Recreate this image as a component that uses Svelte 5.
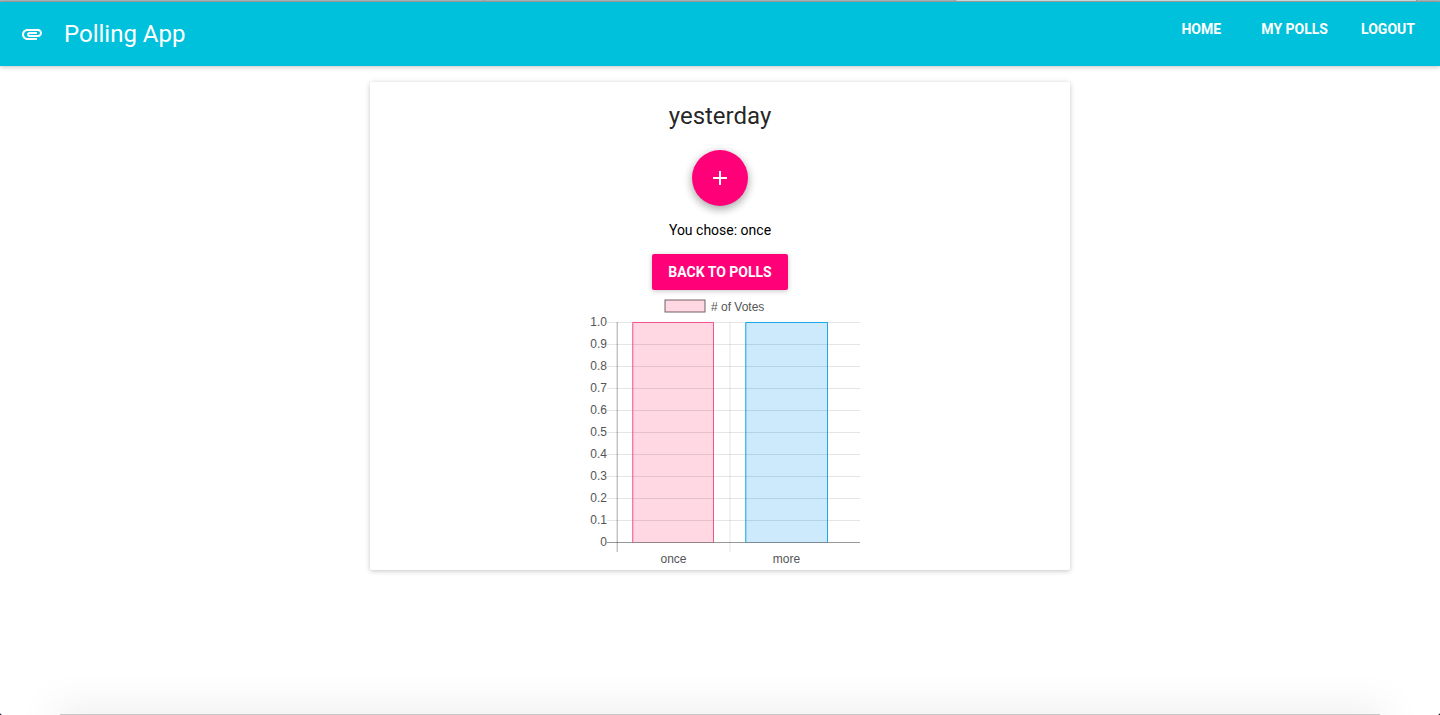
<script>
  const navItems = ['Home', 'My Polls', 'Logout'];
  const ticks = ['1.0', '0.9', '0.8', '0.7', '0.6', '0.5', '0.4', '0.3', '0.2', '0.1', '0'];
  const bars = [
    { label: 'once', x: 52, width: 82, mid: 93.5, tone: 'pink' },
    { label: 'more', x: 165, width: 83, mid: 206.5, tone: 'blue' }
  ];
</script>

<div class="tabs" aria-hidden="true">
  <span class="tab first"></span>
  <span class="tab second"></span>
  <span class="tab active"></span>
  <span class="tab end"></span>
</div>

<header>
  <svg class="clip" viewBox="0 0 24 24" width="24" height="24" aria-hidden="true">
    <path d="M2 12.5C2 9.46 4.46 7 7.5 7H18c2.21 0 4 1.79 4 4s-1.79 4-4 4H9.5C8.12 15 7 13.88 7 12.5S8.12 10 9.5 10H17v2H9.41c-.55 0-.55 1 0 1H18c1.1 0 2-.9 2-2s-.9-2-2-2H7.5C5.57 9 4 10.57 4 12.5S5.57 16 7.5 16H17v2H7.5C4.46 18 2 15.54 2 12.5z" />
  </svg>
  <h1>Polling App</h1>
  <nav>
    {#each navItems as item}
      <a href="#top">{item}</a>
    {/each}
  </nav>
</header>

<main>
  <section class="card">
    <h2>yesterday</h2>
    <button class="add" type="button" aria-label="Add option">
      <svg viewBox="0 0 24 24" width="24" height="24" aria-hidden="true">
        <path d="M19 13h-6v6h-2v-6H5v-2h6V5h2v6h6v2z" />
      </svg>
    </button>
    <p>You chose: once</p>
    <button class="back" type="button">Back to Polls</button>

    <svg class="chart" viewBox="0 0 280 280" width="280" height="280" role="img" aria-label="Number of votes per option">
      <rect class="key" x="85" y="10" width="40" height="12" />
      <text x="131" y="21"># of Votes</text>

      {#each bars as bar}
        <rect class="fill {bar.tone}" x={bar.x} y="32" width={bar.width} height="221" />
        <text class="mid" x={bar.mid} y="273">{bar.label}</text>
      {/each}

      {#each ticks as tick, i}
        <path class="grid" class:zero={tick === '0'} d="M27 {32.5 + i * 22}H280" />
        <text class="tick" x="27" y={36 + i * 22}>{tick}</text>
      {/each}

      {#each bars as bar}
        <path class="edge {bar.tone}" d="M{bar.x + 0.8} 252V32.5H{bar.x + bar.width - 0.5}V252" />
      {/each}
      <path class="axis" d="M37.2 32V262" />
      <path class="divider" d="M150 32V262" />
    </svg>
  </section>
</main>

<div class="dock" aria-hidden="true"></div>
<div class="corner left" aria-hidden="true"></div>
<div class="corner right" aria-hidden="true"></div>

<style>
  :global(body) {
    background: #fff;
    font-family: Roboto, sans-serif;
    color: rgba(0, 0, 0, 0.87);
  }

  .tabs {
    display: flex;
    height: 1px;
    border-bottom: 1px solid #a0a4a5;
    background: #a9b7ba;
  }

  .tab {
    box-sizing: border-box;
    border-right: 1px solid #8c9496;
  }

  .tab.first {
    flex: 485;
  }

  .tab.second {
    flex: 471;
  }

  .tab.active {
    flex: 461;
    background: #c3d6d9;
  }

  .tab.end {
    flex: 23;
    border: 0;
  }

  header {
    display: flex;
    align-items: center;
    height: 64px;
    padding: 0 8px 0 20px;
    background: #00c1db;
    color: #fff;
    box-shadow: 0 1px 6px rgba(0, 0, 0, 0.12), 0 1px 4px rgba(0, 0, 0, 0.12);
  }

  .clip,
  .add svg {
    fill: #fff;
  }

  h1,
  h2 {
    font-size: 24px;
    font-weight: 400;
  }

  h1 {
    flex: 1;
    margin: 0 0 0 20px;
    line-height: 64px;
  }

  nav {
    display: flex;
    align-self: flex-start;
    margin-top: 9px;
  }

  nav a {
    box-sizing: border-box;
    min-width: 88px;
    padding: 0 16px;
    color: #fff;
    font-size: 14px;
    font-weight: 700;
    line-height: 36px;
    text-align: center;
    text-decoration: none;
    text-transform: uppercase;
  }

  main {
    padding: 16px;
  }

  .card {
    display: flex;
    flex-direction: column;
    align-items: center;
    max-width: 700px;
    margin: 0 auto;
    border-radius: 2px;
    background: #fff;
    box-shadow: 0 1px 6px rgba(0, 0, 0, 0.12), 0 1px 4px rgba(0, 0, 0, 0.12);
  }

  h2 {
    margin: 16px 0;
    line-height: 36px;
  }

  button {
    border: 0;
    background: #ff0078;
    color: #fff;
    font-family: inherit;
    cursor: pointer;
  }

  .add {
    display: flex;
    align-items: center;
    justify-content: center;
    width: 56px;
    height: 56px;
    padding: 0;
    border-radius: 50%;
    box-shadow: 0 3px 10px rgba(0, 0, 0, 0.16), 0 3px 10px rgba(0, 0, 0, 0.23);
  }

  p {
    margin: 16px 0;
    color: #000;
    font-size: 14px;
    line-height: 16px;
  }

  .back {
    height: 36px;
    padding: 0 16px;
    border-radius: 2px;
    font-size: 14px;
    font-weight: 700;
    text-transform: uppercase;
    box-shadow: 0 1px 6px rgba(0, 0, 0, 0.12), 0 1px 4px rgba(0, 0, 0, 0.12);
  }

  .chart {
    display: block;
    fill: none;
  }

  .chart text {
    fill: #555;
    font-family: "Liberation Sans", Arial, sans-serif;
    font-size: 12px;
  }

  .chart .mid {
    text-anchor: middle;
  }

  .chart .tick {
    text-anchor: end;
  }

  .key {
    fill: #ffd8e3;
    stroke: rgba(90, 70, 78, 0.85);
  }

  .fill.pink {
    fill: #ffd8e3;
  }

  .fill.blue {
    fill: #cdeafc;
  }

  .edge.pink {
    stroke: #f4538b;
  }

  .edge.blue {
    stroke: #1ba6ea;
  }

  .grid {
    stroke: rgba(0, 0, 0, 0.1);
  }

  .grid.zero {
    stroke: rgba(0, 0, 0, 0.4);
  }

  .axis {
    stroke: rgba(0, 0, 0, 0.35);
  }

  .divider {
    stroke: rgba(0, 0, 0, 0.1);
  }

  .dock {
    position: fixed;
    right: 60px;
    bottom: 0;
    left: 60px;
    height: 1px;
    background: #c8c8c8;
    box-shadow: 0 8px 40px 4px rgba(0, 0, 0, 0.25);
    pointer-events: none;
  }

  .corner {
    position: fixed;
    bottom: 0;
    width: 4px;
    height: 4px;
  }

  .corner.left {
    left: 0;
    background: radial-gradient(circle at 100% 0, transparent 4px, #15152c 5px);
  }

  .corner.right {
    right: 0;
    background: radial-gradient(circle at 0 0, transparent 4px, #151515 5px);
  }
</style>
